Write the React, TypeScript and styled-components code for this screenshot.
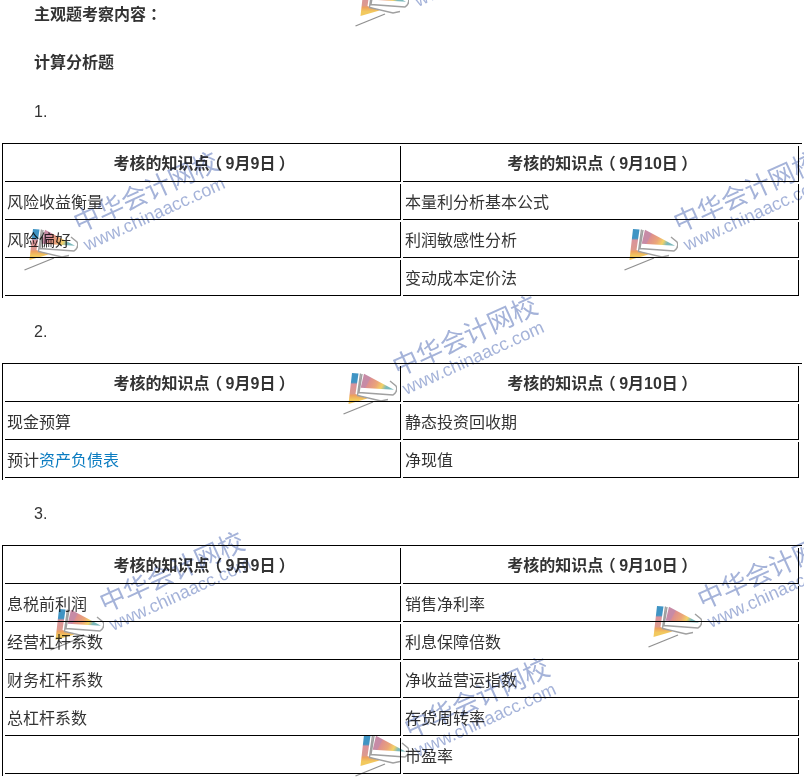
import React from "react";
import styled, { createGlobalStyle } from "styled-components";

const GlobalStyle = createGlobalStyle`
  html, body {
    margin: 0;
    padding: 0;
    background: #fff;
    overflow: hidden;
  }
  body {
    font-family: "Liberation Sans", "Noto Sans CJK SC", sans-serif;
    font-size: 16px;
    color: #333;
  }
`;

const Page = styled.div`
  position: relative;
  width: 804px;
  height: 780px;
  overflow: hidden;
`;

const Para = styled.p<{ $after: number }>`
  margin: 0 0 ${(p) => p.$after}px 34px;
  height: 28px;
  line-height: 28px;
`;

const Title = styled(Para)`
  font-weight: bold;
  line-height: 30px;
`;

const Punct = styled.span`
  font-family: "Noto Sans CJK TC", sans-serif;
  line-height: 1;
`;

const Paren = styled.span`
  display: inline-block;
  width: 16px;
  line-height: 1;
  text-align: center;
  font-family: "Noto Sans CJK SC", sans-serif;
  font-feature-settings: "palt";
`;

const Grid = styled.table`
  width: 800px;
  margin-left: 2px;
  padding-right: 1px;
  table-layout: fixed;
  border-collapse: separate;
  border-spacing: 2px;
  border-top: 1px solid #000;
  border-left: 1px solid #000;
`;

const HeadCell = styled.th`
  box-sizing: border-box;
  height: 36px;
  padding: 0 2px 4px;
  font-weight: bold;
  text-align: center;
  border-right: 1px solid #000;
  border-bottom: 1px solid #000;
`;

const Cell = styled.td`
  box-sizing: border-box;
  height: 36px;
  padding: 0 2px 2px;
  border-right: 1px solid #000;
  border-bottom: 1px solid #000;
`;

const Link = styled.a`
  color: #0b7cc1;
  text-decoration: none;
`;

const Section = styled.div<{ $after: number }>`
  margin-bottom: ${(p) => p.$after}px;
`;

const Mark = styled.div<{ $x: number; $y: number }>`
  position: absolute;
  left: ${(p) => p.$x}px;
  top: ${(p) => p.$y}px;
  width: 54px;
  height: 43px;
  pointer-events: none;
  mix-blend-mode: multiply;
`;

const MarkText = styled.div`
  position: absolute;
  left: 49px;
  top: -25px;
  transform: rotate(-24.5deg);
  transform-origin: 14px 14px;
  white-space: nowrap;
  color: #a5b3d9;
`;

const MarkName = styled.div`
  font-family: "Noto Sans CJK SC", sans-serif;
  font-weight: 400;
  font-size: 26px;
  line-height: 27px;
`;

const MarkUrl = styled.div`
  font-family: "Liberation Sans", sans-serif;
  font-size: 18px;
  line-height: 25px;
`;

const Logo = () => (
  <svg width="54" height="43" viewBox="0 0 54 43">
    <defs>
      <linearGradient id="leftBand" x1="0" y1="0" x2="0" y2="1">
        <stop offset="0.3" stopColor="#3f94c4" />
        <stop offset="0.36" stopColor="#d9939c" />
        <stop offset="0.66" stopColor="#dd9a8e" />
        <stop offset="0.72" stopColor="#eda05e" />
        <stop offset="0.86" stopColor="#f2c95e" />
      </linearGradient>
      <linearGradient id="flagBand" x1="0" y1="0" x2="1" y2="0.25">
        <stop offset="0.32" stopColor="#c78ba6" />
        <stop offset="0.36" stopColor="#de8f8d" />
        <stop offset="0.6" stopColor="#eba578" />
        <stop offset="0.78" stopColor="#f3d267" />
        <stop offset="0.92" stopColor="#7cb9bb" />
      </linearGradient>
    </defs>
    <polygon points="9,1 15.5,1.5 12.5,22 24.5,26.5 5.5,32" fill="url(#leftBand)" />
    <polygon points="21,1.7 51,17.7 17.7,15.7" fill="url(#flagBand)" />
    <path
      d="M17.5 1.5 L14.5 23.5 L38 29 L45 27.5 M19 2 L16 20.5 L50 23 Q55.5 19 53 14 L47 9"
      fill="none"
      stroke="#a0a0a0"
      strokeWidth="1.4"
    />
    <path d="M0.5 42 L30 30" fill="none" stroke="#909090" strokeWidth="1.3" />
  </svg>
);

const Watermark = ({ x, y }: { x: number; y: number }) => (
  <Mark $x={x} $y={y}>
    <Logo />
    <MarkText>
      <MarkName>中华会计网校</MarkName>
      <MarkUrl>www.chinaacc.com</MarkUrl>
    </MarkText>
  </Mark>
);

const marks = [
  [355, -16],
  [24, 228],
  [624, 228],
  [343, 372],
  [50, 608],
  [648, 605],
  [355, 734],
];

const KnowledgeTable = ({ rows }: { rows: React.ReactNode[][] }) => (
  <Grid>
    <thead>
      <tr>
        <HeadCell>
          考核的知识点<Paren>（</Paren>9月9日<Paren>）</Paren>
        </HeadCell>
        <HeadCell>
          考核的知识点<Paren>（</Paren>9月10日<Paren>）</Paren>
        </HeadCell>
      </tr>
    </thead>
    <tbody>
      {rows.map((row, i) => (
        <tr key={i}>
          <Cell>{row[0]}</Cell>
          <Cell>{row[1]}</Cell>
        </tr>
      ))}
    </tbody>
  </Grid>
);

const App: React.FC = () => (
  <Page>
    <GlobalStyle />
    <Title $after={20}>
      主观题考察内容<Punct>：</Punct>
    </Title>
    <Title $after={22}>计算分析题</Title>
    <Para $after={17}>1.</Para>
    <Section $after={20}>
      <KnowledgeTable
        rows={[
          ["风险收益衡量", "本量利分析基本公式"],
          ["风险偏好", "利润敏感性分析"],
          ["\u00a0", "变动成本定价法"],
        ]}
      />
    </Section>
    <Para $after={17}>2.</Para>
    <Section $after={20}>
      <KnowledgeTable
        rows={[
          ["现金预算", "静态投资回收期"],
          [
            <>
              预计<Link href="#">资产负债表</Link>
            </>,
            "净现值",
          ],
        ]}
      />
    </Section>
    <Para $after={17}>3.</Para>
    <KnowledgeTable
      rows={[
        ["息税前利润", "销售净利率"],
        ["经营杠杆系数", "利息保障倍数"],
        ["财务杠杆系数", "净收益营运指数"],
        ["总杠杆系数", "存货周转率"],
        ["\u00a0", "市盈率"],
      ]}
    />
    {marks.map(([x, y]) => (
      <Watermark key={`${x}-${y}`} x={x} y={y} />
    ))}
  </Page>
);

export default App;
